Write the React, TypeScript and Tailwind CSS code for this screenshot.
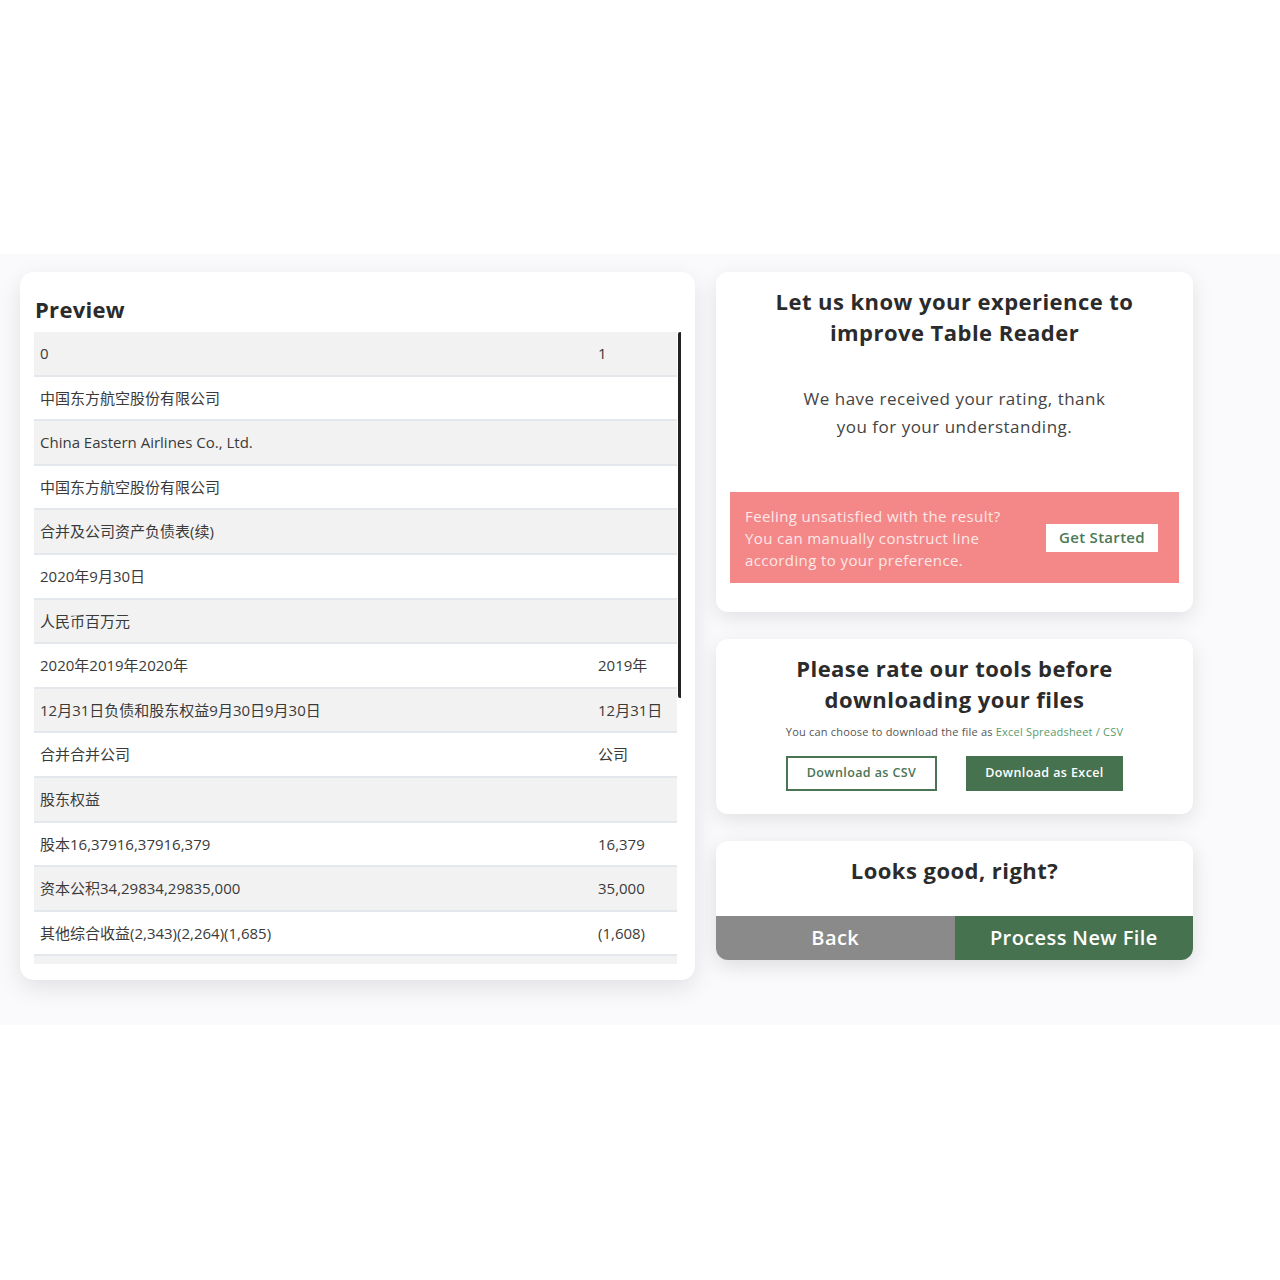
import React from 'react';

const font = { fontFamily: '"Open Sans", "Noto Sans CJK SC", sans-serif' };

const rows: [string, string][] = [
  ['0', '1'],
  ['中国东方航空股份有限公司', ''],
  ['China Eastern Airlines Co., Ltd.', ''],
  ['中国东方航空股份有限公司', ''],
  ['合并及公司资产负债表(续)', ''],
  ['2020年9月30日', ''],
  ['人民币百万元', ''],
  ['2020年2019年2020年', '2019年'],
  ['12月31日负债和股东权益9月30日9月30日', '12月31日'],
  ['合并合并公司', '公司'],
  ['股东权益', ''],
  ['股本16,37916,37916,379', '16,379'],
  ['资本公积34,29834,29835,000', '35,000'],
  ['其他综合收益(2,343)(2,264)(1,685)', '(1,608)'],
  ['', ''],
];

// 左侧预览表格
function PreviewCard() {
  return (
    <div className="w-[675px] h-[708px] bg-white rounded-[14px] shadow-[0_8px_24px_rgba(0,0,0,0.10)] px-[14px] pt-[22px]">
      <h2 className="text-[22px] font-bold text-[#2b2b2b] leading-[30px] pl-px tracking-[0.3px]">Preview</h2>
      <div className="relative mt-[8px] h-[632px] overflow-hidden">
        <div className="w-[643px]">
          {rows.map((r, i) => (
            <div
              key={i}
              className={`grid grid-cols-[564px_1fr] items-center h-[44.6px] border-b-2 border-[#e4e7ec] text-[15px] text-[#3a3a3a] ${i % 2 === 0 ? 'bg-[#f2f2f2]' : 'bg-white'}`}
            >
              <span className="pl-[6px]">{r[0]}</span>
              <span>{r[1]}</span>
            </div>
          ))}
        </div>
        <div className="absolute left-[644px] top-0 w-[4px] h-[366px] bg-[#222] rounded-full" />
      </div>
    </div>
  );
}

export default function App() {
  return (
    <div className="w-full min-h-[1280px] bg-white" style={font}>
      <div className="h-[254px]" />
      <div className="bg-[#fafafc] flex gap-[21px] pl-[20px] pt-[18px] pb-[45px]">
        <PreviewCard />

        <div className="w-[477px] flex flex-col gap-[27px]">
          {/* 评价反馈 */}
          <div className="bg-white rounded-[12px] shadow-[0_6px_20px_rgba(0,0,0,0.10)] pt-[14px] pb-[29px] px-[14px]">
            <h3 className="text-[22px] font-bold text-[#2b2b2b] leading-[31px] text-center tracking-[0.45px]">
              Let us know your experience to<br />improve Table Reader
            </h3>
            <p className="mt-[37px] text-[17px] text-[#444] leading-[28px] text-center tracking-[0.5px]">
              We have received your rating, thank<br />you for your understanding.
            </p>
            <div className="mt-[51px] bg-[#f48787] h-[91px] flex items-center justify-between pl-[15px] pr-[21px]">
              <p className="text-[15px] leading-[22px] text-[#fde8e8] tracking-[0.4px]">
                Feeling unsatisfied with the result?<br />You can manually construct line<br />according to your preference.
              </p>
              <button className="bg-white w-[112px] h-[28px] text-[15px] font-semibold text-[#4a7a55] tracking-[0.3px]">Get Started</button>
            </div>
          </div>

          {/* 下载 */}
          <div className="bg-white rounded-[12px] shadow-[0_6px_20px_rgba(0,0,0,0.10)] pt-[14px] pb-[23px] px-[14px] flex flex-col items-center">
            <h3 className="text-[22px] font-bold text-[#2b2b2b] leading-[31px] text-center tracking-[0.45px]">
              Please rate our tools before<br />downloading your files
            </h3>
            <p className="mt-[9px] text-[11px] text-[#555] tracking-[0.2px]">
              You can choose to download the file as <span className="text-[#5a9a6a]">Excel Spreadsheet / CSV</span>
            </p>
            <div className="mt-[15px] flex gap-[29px]">
              <button className="w-[151px] h-[35px] border-2 border-[#4a7555] text-[12.5px] font-semibold text-[#4a7555] tracking-[0.4px]">Download as CSV</button>
              <button className="w-[157px] h-[35px] bg-[#47724f] text-[12.5px] font-semibold text-white tracking-[0.4px]">Download as Excel</button>
            </div>
          </div>

          {/* 完成 */}
          <div className="bg-white rounded-[12px] shadow-[0_6px_20px_rgba(0,0,0,0.12)] overflow-hidden">
            <h3 className="text-[22px] font-bold text-[#2b2b2b] leading-[31px] text-center pt-[14px] pb-[30px] tracking-[0.45px]">Looks good, right?</h3>
            <div className="flex h-[44px]">
              <button className="flex-1 bg-[#8a8a8a] text-white text-[20px] font-semibold tracking-[0.4px]">Back</button>
              <button className="flex-1 bg-[#47724f] text-white text-[20px] font-semibold tracking-[0.4px]">Process New File</button>
            </div>
          </div>
        </div>
      </div>
    </div>
  );
}
